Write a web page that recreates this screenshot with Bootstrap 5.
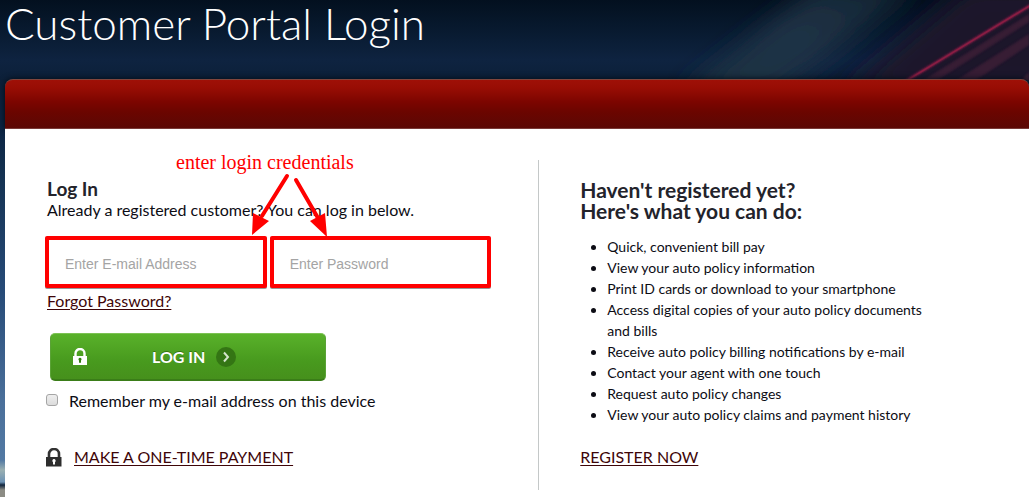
<!DOCTYPE html>
<html lang="en">
<head>
<meta charset="utf-8">
<meta name="viewport" content="width=device-width, initial-scale=1">
<title>Customer Portal Login</title>
<link href="https://cdn.jsdelivr.net/npm/bootstrap@5.3.0/dist/css/bootstrap.min.css" rel="stylesheet">
<style>
  body {
    font-family: Lato, sans-serif; font-size: 16px; line-height: 24px; color: #0c0c14;
    min-height: 100vh; overflow-x: hidden;
    background: linear-gradient(#03101f 0, #07182c 24px, #0e2340 60px, #0c2039 80px, #0c2544 130px, #153353 180px, #264a77 290px, #4a6f9a 400px, #5279a3 460px, #9ab0b2 470px, #6c92b4 482px, #10243c 485px, #8c8c84 490px);
  }
  a { color: #3e0508; text-underline-offset: 2px; }
  .streaks { height: 80px; width: 410px; z-index: 0; }
  .page-title { font-weight: 300; font-size: 44px; line-height: 46px; padding: 0 0 33px 5px; }
  .portal { margin-left: 5px; z-index: 1; }
  .portal-bar {
    height: 50px; border-radius: 8px 8px 0 0;
    border-top: 1px solid #81453c; border-bottom: 1px solid #7a3a38;
    background: linear-gradient(#9f1007 0, #980d04 8px, #7c0500 22px, #6b0500 32px, #5b0805 100%);
    box-shadow: 0 0 6px #020a14;
  }
  .portal-body { padding: 31px 0 7px; }
  .portal-grid { display: grid; grid-template-columns: 12fr 11fr; }
  .login-side { padding: 18px 42px 21px 42px; border-right: 1px solid #c4c8c8; }
  .register-side { padding: 19px 96px 20px 41px; }
  .login-title { font-size: 19px; line-height: 22px; color: #23232b; }
  .register-title { font-size: 21px; line-height: 21px; color: #23232b; }
  .intro { line-height: 20px; margin-bottom: 16px; }
  .fields { gap: 3px; margin: 0 5px 0 -2px; }
  .fields .form-control {
    font-family: "Liberation Sans", sans-serif; font-size: 14px; height: 52px;
    border: 4px solid #f00; border-radius: 2px; padding: 4px 16px 0; box-shadow: 0 1px #999;
  }
  .fields .form-control::placeholder { color: #a4a4a4; }
  .forgot { margin-top: 1px; }
  .btn-login {
    width: 276px; max-width: 100%; height: 48px; margin: 20px 0 8px 3px; padding: 0 22px;
    color: #fff; font-weight: 700; border: 1px solid #5aa236; border-top-color: #7cc253; border-bottom: 2px solid #3a7d18; border-radius: 5px;
    background: linear-gradient(#59b12a, #489a1e 60%, #46901c);
    text-shadow: 0 -1px #36760f;
  }
  .btn-label { margin: 0 11px 0 65px; }
  .remember {
    appearance: none; width: 12px; height: 12px; margin: 0 11px 3px -1px; border: 1px solid #a5a5a5; border-radius: 3px;
    background: linear-gradient(#eee, #dcdcdc);
  }
  .remember:checked { background: #35353b; }
  .one-time { margin: 32px 0 0 -1px; gap: 12px; }
  .benefits { font-size: 14px; line-height: 21px; padding-left: 27px; margin: 15px 0 20px; }
  .callout-note { left: 171px; top: 21px; z-index: 3; font: 20px/24px "Liberation Serif", serif; color: #f00; pointer-events: none; white-space: nowrap; }
  .callout-arrows { left: 245px; top: 43px; z-index: 3; pointer-events: none; }
</style>
</head>
<body>
<svg class="streaks position-absolute top-0 end-0" viewBox="0 0 410 80" preserveAspectRatio="none" aria-hidden="true">
  <defs>
    <filter id="soft" x="-30%" y="-30%" width="160%" height="160%"><feGaussianBlur stdDeviation="12"/></filter>
    <filter id="fine"><feGaussianBlur stdDeviation="1.2"/></filter>
    <linearGradient id="beam" x1="0" y1="1" x2="1" y2="0"><stop offset="0" stop-color="#1b3040"/><stop offset=".5" stop-color="#203246"/><stop offset="1" stop-color="#112532"/></linearGradient>
  </defs>
  <path d="M60 95 200-15H300L155 95Z" fill="url(#beam)" filter="url(#soft)"/>
  <path d="M220 95 350-15H440V95Z" fill="#1b172b" filter="url(#soft)"/>
  <path d="M292 88 410 14V22L306 88ZM325 88 410 34V45L345 88ZM395 88 410 72V88Z" fill="#48203a" opacity=".6" filter="url(#fine)"/>
  <path d="M282 84 412 5" stroke="#96204a" stroke-width="2.4" filter="url(#fine)"/>
  <path d="M282 84 412 5" stroke="#8a1d43" stroke-width="1.4"/>
</svg>

<h1 class="page-title position-relative text-white m-0">Customer Portal Login</h1>

<main class="portal position-relative">
  <div class="portal-bar"></div>
  <div class="portal-body position-relative bg-white">
    <div class="portal-grid">
      <section class="login-side">
        <h2 class="login-title fw-bold m-0">Log In</h2>
        <p class="intro">Already a registered customer? You can log in below.</p>
        <form>
          <div class="fields d-flex">
            <input class="form-control" type="email" placeholder="Enter E-mail Address" aria-label="E-mail address">
            <input class="form-control" type="password" placeholder="Enter Password" aria-label="Password">
          </div>
          <a class="forgot d-inline-block" href="#">Forgot Password?</a>
          <button class="btn-login d-flex align-items-center" type="submit">
            <svg width="14" height="18" viewBox="0 0 14 18" aria-hidden="true"><path d="M2.5 9V5.500a4.500 4.500 0 0 1 9 0V9" fill="none" stroke="#fff" stroke-width="2.4"/><path d="M0 8h14v9H0z" fill="#fff"/><path d="M7 9.800a1.600 1.600 0 0 1 1 2.800v2.200H6v-2.200a1.600 1.600 0 0 1 1-2.800z" fill="#348010"/></svg>
            <span class="btn-label">LOG IN</span>
            <svg width="20" height="20" viewBox="0 0 20 20" aria-hidden="true"><circle cx="10" cy="10" r="10" fill="#347514"/><path d="M8 5.500 12 10 8 14.500" fill="none" stroke="#d4e4cb" stroke-width="2"/></svg>
          </button>
          <div class="d-flex align-items-center">
            <input class="remember" type="checkbox" id="remember">
            <label for="remember">Remember my e-mail address on this device</label>
          </div>
        </form>
        <div class="one-time d-flex align-items-center">
          <svg width="16" height="19" viewBox="0 0 16 19" aria-hidden="true"><path d="M3 9V6a5 5 0 0 1 10 0v3" fill="none" stroke="#333" stroke-width="2.6"/><path d="M0 9h15.500v9.500H0z" fill="#2d2d2d"/><path d="M8 11a1.800 1.800 0 0 1 1 3.200V16.500H7v-2.300A1.800 1.800 0 0 1 8 11z" fill="#fff"/></svg>
          <a href="#">MAKE A ONE-TIME PAYMENT</a>
        </div>
      </section>
      <section class="register-side">
        <h2 class="register-title fw-bold m-0">Haven't registered yet?<br>Here's what you can do:</h2>
        <ul class="benefits">
          <li>Quick, convenient bill pay</li>
          <li>View your auto policy information</li>
          <li>Print ID cards or download to your smartphone</li>
          <li>Access digital copies of your auto policy documents and bills</li>
          <li>Receive auto policy billing notifications by e-mail</li>
          <li>Contact your agent with one touch</li>
          <li>Request auto policy changes</li>
          <li>View your auto policy claims and payment history</li>
        </ul>
        <a href="#">REGISTER NOW</a>
      </section>
    </div>
    <div class="callout-note position-absolute">enter login credentials</div>
    <svg class="callout-arrows position-absolute" width="80" height="66" viewBox="0 0 80 66" aria-hidden="true">
      <path d="M37 4 12 44M46 8 68 46" stroke="#f00" stroke-width="4" stroke-linecap="round"/>
      <path d="M2 63 3 41 19 49ZM77 65 60 49 75 41Z" fill="#f00"/>
    </svg>
  </div>
</main>
<script src="https://cdn.jsdelivr.net/npm/bootstrap@5.3.0/dist/js/bootstrap.bundle.min.js"></script>
</body>
</html>
